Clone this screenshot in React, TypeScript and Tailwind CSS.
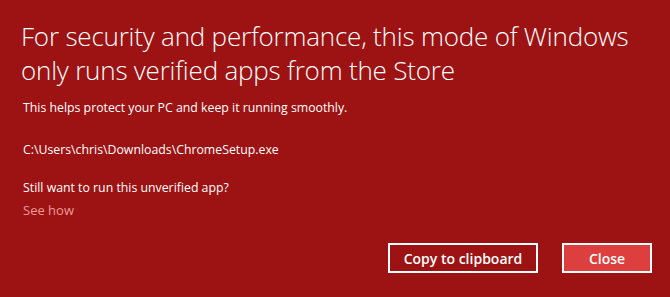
export default function App() {
  return (
    <div className="w-[670px] h-[297px] bg-[#9d1212] text-white flex flex-col font-['Open_Sans',sans-serif] overflow-hidden">
      {/* Heading */}
      <h1 className="pl-[21px] pt-[19px] pr-2 text-[26px] font-light leading-[34px] tracking-[-0.2px] whitespace-nowrap">
        For security and performance, this mode of Windows
        <br />
        only runs verified apps from the Store
      </h1>

      {/* Body */}
      <div className="pl-[23px] mt-[10px] text-[12.3px] leading-[22px]">
        <p>This helps protect your PC and keep it running smoothly.</p>
        <p className="mt-[20px]">C:\Users\chris\Downloads\ChromeSetup.exe</p>
        <p className="mt-[16px]">Still want to run this unverified app?</p>
        <p className="text-[13px] text-[#eb9a9a]">See how</p>
      </div>

      {/* Buttons */}
      <div className="mt-auto mb-[24px] mr-[18px] flex justify-end gap-[24px]">
        <button className="h-[30px] w-[150px] border-2 border-white text-[14px] font-semibold">
          Copy to clipboard
        </button>
        <button className="h-[30px] w-[90px] border-2 border-white bg-[#dd3e3e] text-[14px] font-semibold">
          Close
        </button>
      </div>
    </div>
  );
}
